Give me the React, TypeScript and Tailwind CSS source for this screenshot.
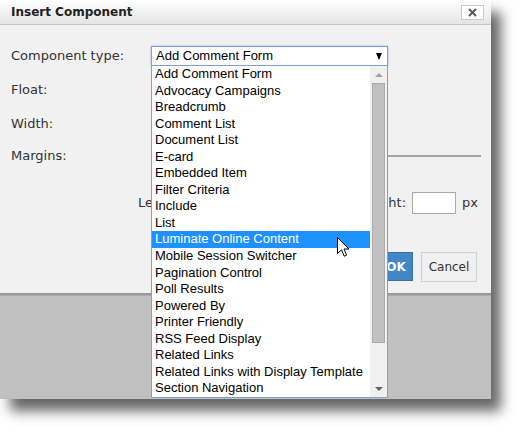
import React from 'react';

const ITEMS = [
  'Add Comment Form',
  'Advocacy Campaigns',
  'Breadcrumb',
  'Comment List',
  'Document List',
  'E-card',
  'Embedded Item',
  'Filter Criteria',
  'Include',
  'List',
  'Luminate Online Content',
  'Mobile Session Switcher',
  'Pagination Control',
  'Poll Results',
  'Powered By',
  'Printer Friendly',
  'RSS Feed Display',
  'Related Links',
  'Related Links with Display Template',
  'Section Navigation',
];

const SELECTED = 'Luminate Online Content';

// classic arrow pointer
const Cursor = () => (
  <svg width="13" height="21" viewBox="0 0 13 21" className="absolute left-[185px] top-[6px]">
    <path
      d="M0.5 0.5 L0.5 16.5 L4.5 12.8 L7.2 19.2 L9.6 18.2 L7 12 L12 12 Z"
      fill="#fff"
      stroke="#000"
      strokeWidth="1"
      strokeLinejoin="miter"
    />
  </svg>
);

const Dropdown = () => (
  <div className="absolute -left-px top-[18px] z-10 w-[237px] h-[333px] bg-white border border-[#7f9fd0] flex">
    <ul className="flex-1 font-['Liberation_Sans',Arial,sans-serif] text-[13px] text-black">
      {ITEMS.map((item) => {
        const active = item === SELECTED;
        return (
          <li
            key={item}
            className={`relative h-[16.55px] leading-[16.55px] pl-[3px] whitespace-nowrap ${
              active ? 'bg-[#1e90ff] text-white' : ''
            }`}
          >
            {item}
            {active && <Cursor />}
          </li>
        );
      })}
    </ul>
    {/* scrollbar */}
    <div className="w-[17px] bg-[#f0f0f0] flex flex-col items-center">
      <div className="h-[17px] flex items-center justify-center">
        <span className="w-0 h-0 border-x-[4px] border-x-transparent border-b-[4px] border-b-[#a3a3a3]" />
      </div>
      <div className="w-[13px] h-[260px] bg-[#c1c1c1] border border-[#ababab]" />
      <div className="flex-1" />
      <div className="h-[17px] flex items-center justify-center">
        <span className="w-0 h-0 border-x-[4px] border-x-transparent border-t-[4px] border-t-[#5f5f5f]" />
      </div>
    </div>
  </div>
);

export default function App() {
  return (
    <div className="w-[531px] h-[440px] bg-white overflow-hidden font-['DejaVu_Sans',Verdana,sans-serif]">
      <div className="relative w-[491px] h-[399px] flex flex-col shadow-[10px_12px_12px_rgba(0,0,0,0.6)]">
        {/* title bar */}
        <div className="h-[25px] shrink-0 flex items-center justify-between pl-[11px] pr-[7px] bg-gradient-to-b from-[#ffffff] to-[#e4e4e4] border-b border-[#c6c6c6]">
          <span className="text-[12px] font-bold text-[#222]">Insert Component</span>
          <button className="w-[23px] h-[15px] flex items-center justify-center bg-white border border-[#c9c9c9] text-[#555]">
            <svg width="9" height="9" viewBox="0 0 9 9">
              <path d="M1 1 L8 8 M8 1 L1 8" stroke="#5a5a5a" strokeWidth="2" />
            </svg>
          </button>
        </div>

        {/* body */}
        <div className="relative z-10 h-[268px] shrink-0 bg-[#f1f1f1] pt-[14px] pl-[11px] pr-[10px] text-[13px] text-[#333]">
          <div className="grid grid-cols-[140px_1fr] items-center">
            <div className="h-[34px] flex items-center">Component type:</div>
            <div className="relative h-[34px] flex items-center">
              <div className="relative w-[237px] h-[20px] bg-white border border-[#7ba2d8] shadow-[0_0_2px_rgba(90,140,220,0.6)] flex items-center justify-between pl-[4px] pr-[5px] font-['Liberation_Sans',Arial,sans-serif] text-black">
                <span>Add Comment Form</span>
                <span className="w-0 h-0 border-x-[3.5px] border-x-transparent border-t-[7px] border-t-black" />
                <Dropdown />
              </div>
            </div>

            <div className="h-[34px] flex items-center">Float:</div>
            <div className="h-[34px]" />

            <div className="h-[34px] flex items-center">Width:</div>
            <div className="h-[34px]" />

            <div className="h-[30px] flex items-center">Margins:</div>
            <div className="h-[30px] flex items-center pl-[6px]">
              <div className="w-full h-[2px] bg-[#a3a3a3]" />
            </div>
          </div>

          <div className="mt-[21px] ml-[127px] mr-[3px] flex items-center justify-between">
            <div className="flex items-center gap-[6px]">
              <span>Left:</span>
              <span className="w-[44px] h-[22px] bg-white border border-[#a9a9a9]" />
              <span>px</span>
            </div>
            <div className="flex items-center gap-[6px]">
              <span>Right:</span>
              <span className="w-[44px] h-[22px] bg-white border border-[#a9a9a9]" />
              <span>px</span>
            </div>
          </div>

          <div className="mt-[38px] mr-[4px] flex justify-end gap-[8px]">
            <button className="w-[34px] h-[29px] bg-[#4186c6] border border-[#336fa8] text-white font-bold text-[12px]">
              OK
            </button>
            <button className="w-[56px] h-[30px] bg-[#f0f0f0] border border-[#d0d0d0] text-[#333] text-[12px]">
              Cancel
            </button>
          </div>
        </div>

        {/* footer strip */}
        <div className="h-[3px] shrink-0 bg-gradient-to-b from-[#8e8e8e] to-[#b0b0b0]" />
        <div className="flex-1 bg-[#c0c0c0]" />
      </div>
    </div>
  );
}
